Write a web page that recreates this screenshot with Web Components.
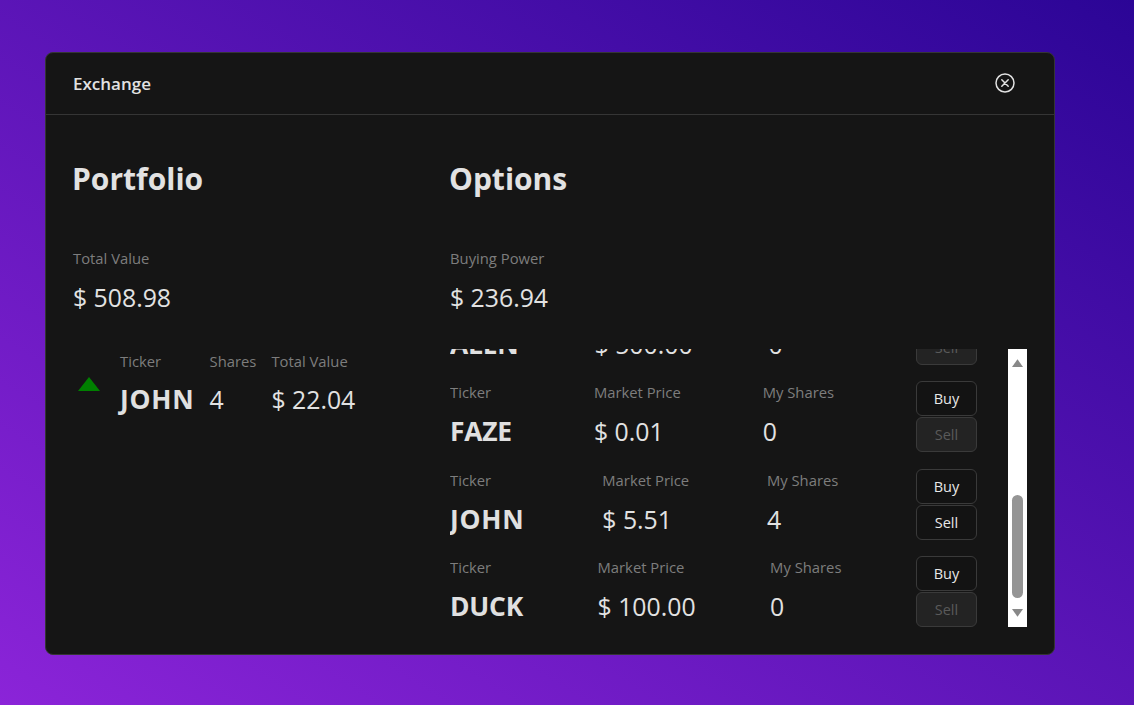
<!DOCTYPE html>
<html>
<head>
<meta charset="utf-8">
<title>Exchange</title>
<style>
  html, body { margin: 0; height: 100%; }
  body {
    display: flex;
    align-items: flex-start;
    padding: 52px 0 0 45px;
    box-sizing: border-box;
    overflow: hidden;
    font-family: "Open Sans", "Noto Sans", sans-serif;
    background: linear-gradient(to top right, #8b24d8 0%, #2b0596 100%);
  }
</style>
</head>
<body>
<exchange-modal heading="Exchange">
  <portfolio-panel total="$ 508.98">
    <holding-row ticker="JOHN" shares="4" value="$ 22.04" style="--ticker-tracking: 0.8px"></holding-row>
  </portfolio-panel>
  <options-panel power="$ 236.94">
    <option-row ticker="ALEN" price="$ 500.00" shares="0"></option-row>
    <option-row ticker="FAZE" price="$ 0.01" shares="0"></option-row>
    <option-row ticker="JOHN" price="$ 5.51" shares="4" style="--ticker-tracking: 0.8px"></option-row>
    <option-row ticker="DUCK" price="$ 100.00" shares="0"></option-row>
  </options-panel>
</exchange-modal>

<script>
  class AppStat extends HTMLElement {
    constructor() {
      super();
      this.attachShadow({ mode: 'open' });
    }

    connectedCallback() {
      const kind = this.getAttribute('kind') || 'number';
      this.shadowRoot.innerHTML = `
        <style>
          :host { display: block; white-space: nowrap; }
          .label { font-size: 14.8px; line-height: 20px; color: #7d7d7d; }
          .value {
            font-size: 24.8px;
            line-height: 36px;
            margin-top: var(--stat-gap, 10px);
            color: #e2e2e2;
          }
          .value.strong {
            font-size: 26.4px;
            font-weight: 700;
            color: #e0e0e0;
            letter-spacing: var(--ticker-tracking, -0.2px);
          }
        </style>
        <div class="label">${this.getAttribute('label')}</div>
        <div class="value ${kind === 'ticker' ? 'strong' : ''}">${this.getAttribute('value')}</div>
      `;
    }
  }

  class ExchangeModal extends HTMLElement {
    constructor() {
      super();
      this.attachShadow({ mode: 'open' });
    }

    connectedCallback() {
      this.shadowRoot.innerHTML = `
        <style>
          :host {
            display: block;
            width: 1010px;
            height: 603px;
            box-sizing: border-box;
            background: #151515;
            border: 1px solid #353535;
            border-radius: 8px;
            color: #e2e2e2;
          }
          header {
            height: 62px;
            box-sizing: border-box;
            border-bottom: 1px solid #353535;
            display: flex;
            align-items: center;
            justify-content: space-between;
            padding: 0 39px 2px 27px;
            font-size: 17px;
            font-weight: 600;
          }
          header span { padding-top: 2px; }
          svg { display: block; width: 20px; height: 20px; }
          main { display: flex; padding: 34px 27px 0 27px; }
        </style>
        <header>
          <span>${this.getAttribute('heading')}</span>
          <svg viewBox="0 0 20 20" fill="none" stroke="#e2e2e2" stroke-width="1.5" stroke-linecap="round">
            <circle cx="10" cy="10" r="9"/>
            <path d="M6.8 6.8l6.4 6.4M13.2 6.8l-6.4 6.4"/>
          </svg>
        </header>
        <main><slot></slot></main>
      `;
    }
  }

  class PortfolioPanel extends HTMLElement {
    constructor() {
      super();
      this.attachShadow({ mode: 'open' });
    }

    connectedCallback() {
      this.shadowRoot.innerHTML = `
        <style>
          :host { display: block; width: 377px; flex: none; }
          h2 { margin: 0 0 39px -1px; font-size: 30px; line-height: 60px; font-weight: 700; color: #e2e2e2; }
          app-stat { --stat-gap: 11px; }
          .rows { margin-top: 36px; --stat-gap: 10px; }
        </style>
        <h2>Portfolio</h2>
        <app-stat label="Total Value" value="${this.getAttribute('total')}"></app-stat>
        <div class="rows"><slot></slot></div>
      `;
    }
  }

  class HoldingRow extends HTMLElement {
    constructor() {
      super();
      this.attachShadow({ mode: 'open' });
    }

    connectedCallback() {
      this.shadowRoot.innerHTML = `
        <style>
          :host { display: flex; align-items: center; }
          .up {
            width: 0; height: 0; margin: 0 20px 0 5px;
            border-left: 11px solid transparent;
            border-right: 11px solid transparent;
            border-bottom: 14px solid #008000;
          }
          .stats { display: flex; gap: 15px; }
        </style>
        <div class="up"></div>
        <div class="stats">
          <app-stat kind="ticker" label="Ticker" value="${this.getAttribute('ticker')}"></app-stat>
          <app-stat label="Shares" value="${this.getAttribute('shares')}"></app-stat>
          <app-stat label="Total Value" value="${this.getAttribute('value')}"></app-stat>
        </div>
      `;
    }
  }

  class ScrollTrack extends HTMLElement {
    constructor() {
      super();
      this.attachShadow({ mode: 'open' });
    }

    connectedCallback() {
      this.shadowRoot.innerHTML = `
        <style>
          :host {
            display: flex;
            flex-direction: column;
            align-items: center;
            flex: none;
            width: 19px;
            box-sizing: border-box;
            padding: 10px 0;
            background: #fff;
          }
          svg { display: block; width: 11px; height: 8px; }
          .thumb {
            width: 11px;
            height: 103px;
            margin: auto 0 11px;
            border-radius: 6px;
            background: #959595;
          }
        </style>
        <svg viewBox="0 0 11 8"><path d="M5.500 0.200L11 8H0z" fill="#888"/></svg>
        <div class="thumb"></div>
        <svg viewBox="0 0 11 8"><path d="M0 0H11L5.500 7.800z" fill="#888"/></svg>
      `;
    }
  }

  class OptionsPanel extends HTMLElement {
    constructor() {
      super();
      this.attachShadow({ mode: 'open' });
    }

    connectedCallback() {
      this.shadowRoot.innerHTML = `
        <style>
          :host { display: block; flex: 1; min-width: 0; }
          h2 { margin: 0 0 39px -1px; font-size: 30px; line-height: 60px; font-weight: 700; color: #e2e2e2; }
          app-stat { --stat-gap: 11px; }
          .box { display: flex; height: 278px; margin-top: 34px; }
          .list { flex: 1; min-width: 0; overflow: hidden; --stat-gap: 11px; }
        </style>
        <h2>Options</h2>
        <app-stat label="Buying Power" value="${this.getAttribute('power')}"></app-stat>
        <div class="box">
          <div class="list"><slot></slot></div>
          <scroll-track></scroll-track>
        </div>
      `;
      const list = this.shadowRoot.querySelector('.list');
      list.scrollTop = 10000;
    }
  }

  class OptionRow extends HTMLElement {
    constructor() {
      super();
      this.attachShadow({ mode: 'open' });
    }

    connectedCallback() {
      const held = Number(this.getAttribute('shares')) > 0;
      this.shadowRoot.innerHTML = `
        <style>
          :host { display: flex; align-items: flex-start; height: 72px; margin-top: 15.500px; padding-right: 31px; }
          .stats { display: flex; width: 466px; flex: none; padding-top: 2px; }
          app-stat { flex: 1 1 auto; }
          .actions { display: flex; flex-direction: column; gap: 1px; padding-top: 1px; }
          button {
            display: block;
            width: 61px;
            height: 35px;
            padding: 0;
            border: 1px solid #3a3a3a;
            border-radius: 6px;
            background: #131313;
            color: #e8e8e8;
            font: 400 14.500px "Open Sans", "Noto Sans", sans-serif;
          }
          button:disabled { background: #232323; color: #5a5a5a; }
        </style>
        <div class="stats">
          <app-stat kind="ticker" label="Ticker" value="${this.getAttribute('ticker')}"></app-stat>
          <app-stat label="Market Price" value="${this.getAttribute('price')}"></app-stat>
          <app-stat label="My Shares" value="${this.getAttribute('shares')}"></app-stat>
        </div>
        <div class="actions">
          <button>Buy</button>
          <button ${held ? '' : 'disabled'}>Sell</button>
        </div>
      `;
    }
  }

  customElements.define('app-stat', AppStat);
  customElements.define('exchange-modal', ExchangeModal);
  customElements.define('holding-row', HoldingRow);
  customElements.define('scroll-track', ScrollTrack);
  customElements.define('option-row', OptionRow);
  customElements.define('portfolio-panel', PortfolioPanel);
  customElements.define('options-panel', OptionsPanel);
</script>
</body>
</html>
